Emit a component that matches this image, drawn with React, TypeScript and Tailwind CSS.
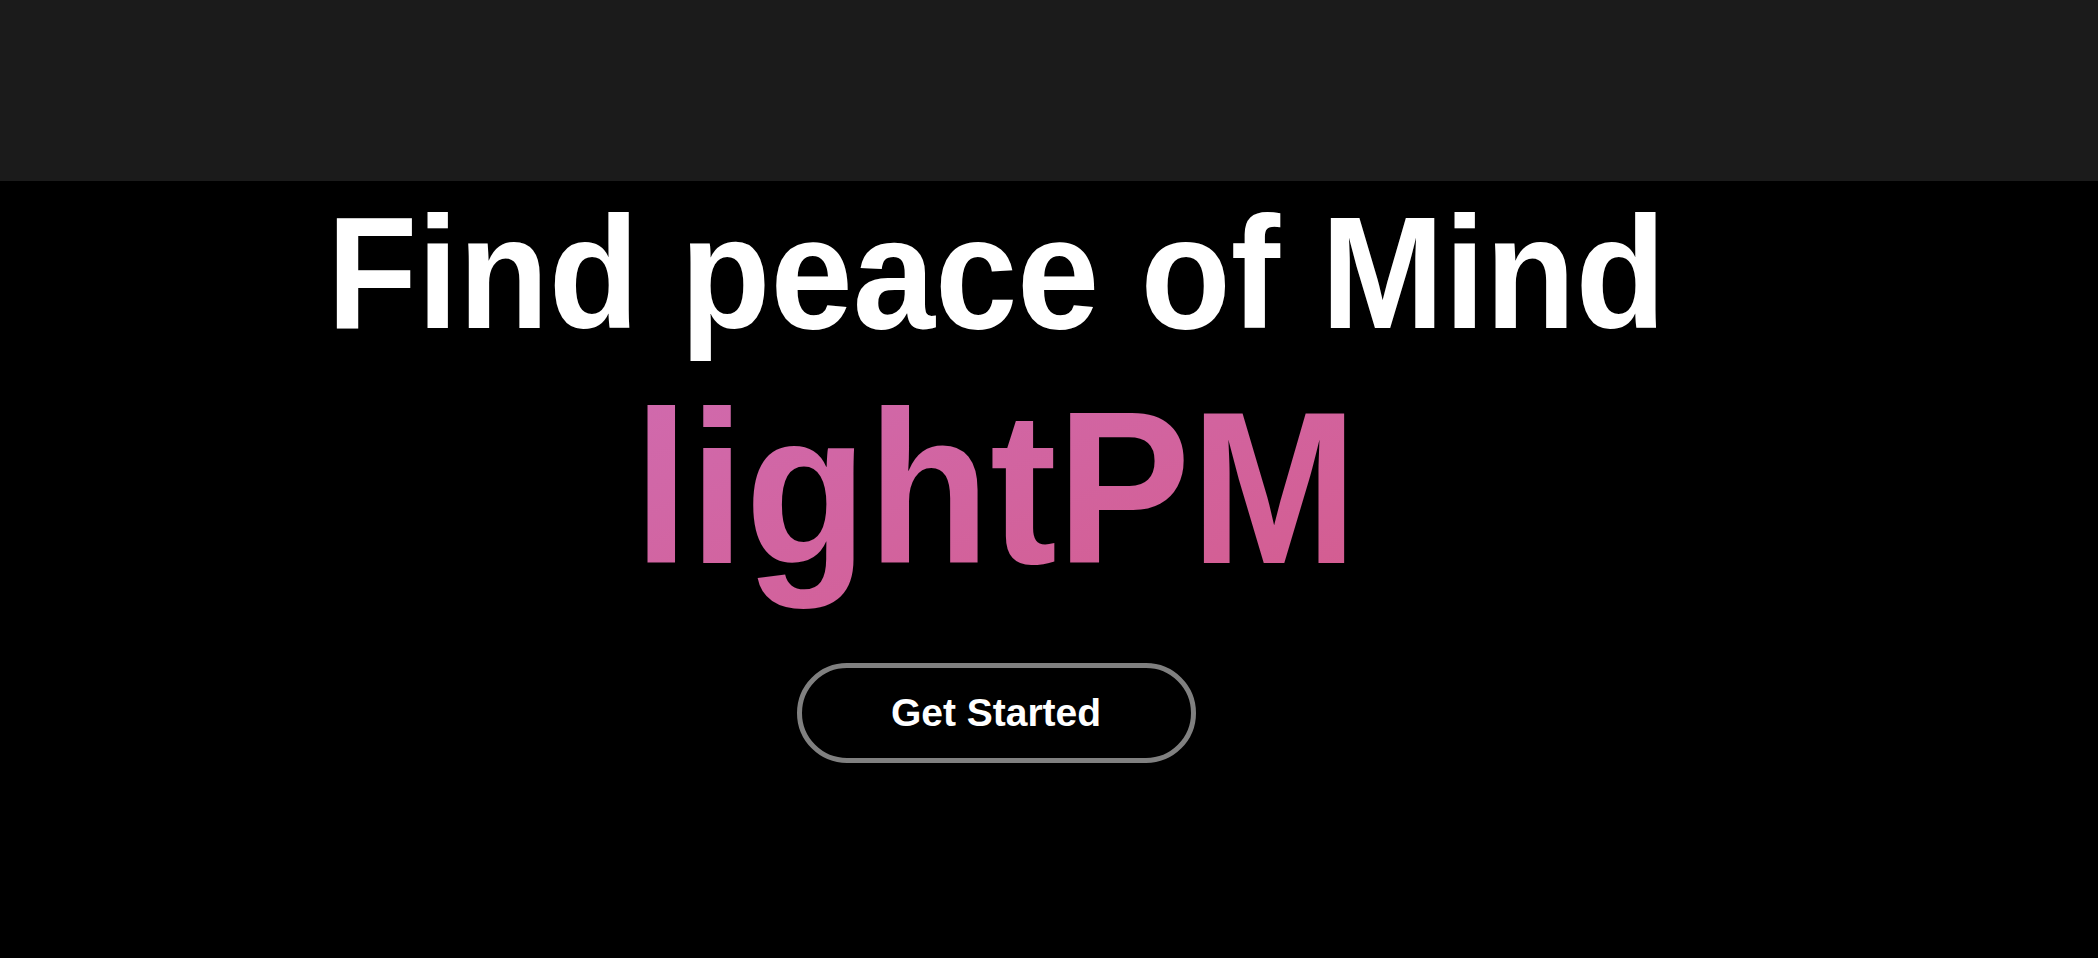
import React from 'react';

export default function App() {
  return (
    <div className="min-h-screen w-full bg-black font-['Liberation_Sans',Arial,sans-serif]">
      <header className="h-[181px] w-full bg-[#1b1b1b]" />

      <main className="flex flex-col items-center pr-[106px]">
        <h1 className="mt-[12px] scale-x-[0.924] text-[160px] font-bold leading-none text-white whitespace-nowrap">
          Find peace of Mind
        </h1>
        <h2 className="mt-[26px] scale-x-[0.92] bg-gradient-to-br from-[#d06aae] to-[#d45b8d] bg-clip-text pb-[40px] text-[218px] font-bold leading-none text-transparent">
          lightPM
        </h2>
        <button className="mt-[26px] flex h-[100px] w-[399px] items-center justify-center rounded-full border-[5px] border-[#808080] bg-black text-[39px] font-bold text-white cursor-pointer">
          Get Started
        </button>
      </main>
    </div>
  );
}
